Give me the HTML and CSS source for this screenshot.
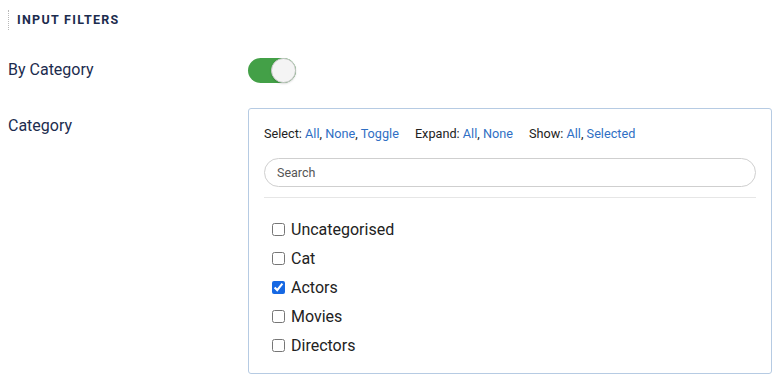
FILE: index.html
```html
<!DOCTYPE html>
<html lang="en">
<head>
  <meta charset="UTF-8" />
  <meta name="viewport" content="width=device-width, initial-scale=1.0" />
  <title>Input Filters</title>
  <link rel="stylesheet" href="styles.css">
</head>
<body>
  <section class="panel">
    <h2 class="section-title">Input Filters</h2>

    <div class="field">
      <label class="field-label" for="by-category">By Category</label>
      <label class="switch">
        <input type="checkbox" id="by-category" checked />
        <span class="track"><span class="knob"></span></span>
      </label>
    </div>

    <div class="field field-top">
      <div class="field-label">Category</div>
      <div class="tree-box">
        <div class="tree-actions">
          <span class="group">Select: <a href="#">All</a>, <a href="#">None</a>, <a href="#">Toggle</a></span>
          <span class="group">Expand: <a href="#">All</a>, <a href="#">None</a></span>
          <span class="group">Show: <a href="#">All</a>, <a href="#">Selected</a></span>
        </div>
        <input type="text" class="search" placeholder="Search" />
        <hr class="divider" />
        <ul class="tree-list">
          <li><label><input type="checkbox" /> Uncategorised</label></li>
          <li><label><input type="checkbox" /> Cat</label></li>
          <li><label><input type="checkbox" checked /> Actors</label></li>
          <li><label><input type="checkbox" /> Movies</label></li>
          <li><label><input type="checkbox" /> Directors</label></li>
        </ul>
      </div>
    </div>
  </section>
</body>
</html>
```

FILE: styles.css
```css
/* Variables & Reset */
:root {
  --navy: #1c2c4e;
  --link: #2f6fc4;
  --green: #43a047;
  --box-border: #b6cbe3;
}
* { margin: 0; padding: 0; box-sizing: border-box; }
body { font-family: Roboto, 'Liberation Sans', sans-serif; color: var(--navy); background: #fff; }
a { text-decoration: none; color: var(--link); }

.panel { padding: 10px 4px 0 8px; }

/* Heading */
.section-title { font-size: 12.5px; font-weight: 700; letter-spacing: 1.3px; text-transform: uppercase; line-height: 20px; padding-left: 8px; border-left: 1px dotted #b8b8b8; margin-bottom: 28px; }

/* Form rows */
.field { display: flex; align-items: center; margin-bottom: 25px; }
.field:last-child { margin-bottom: 0; }
.field-top { align-items: flex-start; }
.field-label { width: 240px; flex-shrink: 0; font-size: 16px; line-height: 24px; }
.field-top .field-label { margin-top: 6px; }
label.field-label { position: relative; top: -1px; }

/* Toggle */
.switch { display: inline-block; cursor: pointer; }
.switch input { display: none; }
.track { display: flex; justify-content: flex-end; align-items: center; width: 48px; height: 25px; border-radius: 13px; background: var(--green); }
.knob { width: 25px; height: 25px; border-radius: 50%; background: #f4f4f4; border: 1px solid #c9c9c9; box-shadow: 0 1px 2px rgba(0,0,0,0.15); }

/* Tree box */
.tree-box { flex: 1; border: 1px solid var(--box-border); border-radius: 3px; padding: 17px 15px 13px 15px; height: 266px; }
.tree-actions { display: flex; gap: 16px; font-size: 12.7px; line-height: 16px; color: #222; }
.search { display: block; width: 100%; height: 29px; margin-top: 16px; border: 1px solid #cfcfcf; border-radius: 15px; padding: 0 12px; font-family: inherit; font-size: 12.5px; color: #333; outline: none; }
.search::placeholder { color: #555; }
.divider { border: 0; border-top: 1px solid #e6e6e6; margin-top: 10px; }
.tree-list { list-style: none; padding: 17px 0 0 8px; }
.tree-list li { font-size: 16px; line-height: 29px; color: #222; }
.tree-list label { display: flex; align-items: center; gap: 6px; }
.tree-list input { width: 13px; height: 13px; margin: 0; accent-color: #1668e3; }
```
